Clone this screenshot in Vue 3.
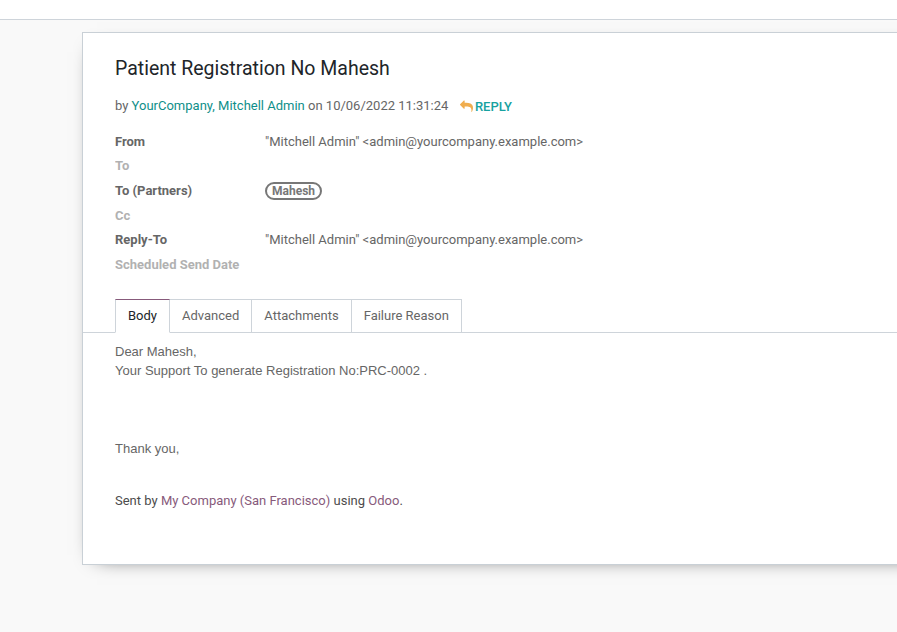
<script setup>
const fields = [
  { label: 'From', value: '"Mitchell Admin" <admin@yourcompany.example.com>' },
  { label: 'To', empty: true },
  { label: 'To (Partners)', tag: 'Mahesh' },
  { label: 'Cc', empty: true },
  { label: 'Reply-To', value: '"Mitchell Admin" <admin@yourcompany.example.com>' },
  { label: 'Scheduled Send Date', empty: true },
]
const tabs = ['Body', 'Advanced', 'Attachments', 'Failure Reason']
</script>

<template>
  <div class="page">
    <header class="topbar"></header>
    <main class="sheet">
      <h1>Patient Registration No Mahesh</h1>
      <div class="byline">
        <span>by <a>YourCompany, Mitchell Admin</a> on 10/06/2022 11:31:24</span>
        <button class="reply">
          <svg viewBox="0 0 1792 1792" width="13" height="13"><path fill="#f0ad4e" d="M1792 1120q0 166-127 451-3 7-10.500 24t-13.500 30-13 22q-12 17-28 17-15 0-23.500-10t-8.500-25q0-9 2.500-26.500t2.500-23.500q5-68 5-123 0-101-17.500-181t-48.500-138.500-80-101-105.500-69.500-133-42.500-154-21.500-175.500-6h-224v256q0 26-19 45t-45 19-45-19l-512-512q-19-19-19-45t19-45l512-512q19-19 45-19t45 19 19 45v256h224q713 0 875 403 53 134 53 333z" /></svg>REPLY
        </button>
      </div>
      <dl class="fields">
        <div v-for="f in fields" :key="f.label" class="field">
          <dt :class="{ empty: f.empty }">{{ f.label }}</dt>
          <dd><span v-if="f.tag" class="tag">{{ f.tag }}</span><template v-else>{{ f.value }}</template></dd>
        </div>
      </dl>
      <nav class="tabs">
        <a v-for="(t, i) in tabs" :key="t" class="tab" :class="{ active: i === 0 }">{{ t }}</a>
      </nav>
      <section class="body">
        <p class="message">Dear Mahesh,<br>Your Support To generate Registration No:PRC-0002 .</p>
        <p class="message thanks">Thank you,</p>
        <p class="sent">Sent by <a>My Company (San Francisco)</a> using <a>Odoo</a>.</p>
      </section>
    </main>
  </div>
</template>

<style>
body { background: #f9f9f9; overflow: hidden; }
</style>
<style scoped>
* { box-sizing: border-box; }
.page { height: 632px; overflow: hidden; background: #f9f9f9; color: #666; font: 13px/19.500px Roboto, sans-serif; }
.topbar { height: 20px; background: #fff; border-bottom: 1px solid #ced4da; }
.sheet { margin: 12px -60px 0 82px; height: 533px; padding-top: 24px; background: #fff; border: 1px solid #c9d0d6; box-shadow: 0 5px 20px -15px #000; }
h1 { margin: 0 32px; font-size: 19.500px; line-height: 24px; font-weight: 400; color: #212529; }
.byline { display: flex; align-items: center; margin: 14px 32px 0; height: 22px; }
.byline a { color: #108f8a; }
.reply { display: flex; align-items: center; margin: 2px 0 0 12px; padding: 0; border: 0; background: none; color: #17a2a0; font: 500 13px/20px Roboto, sans-serif; }
.reply svg { margin: 0 1.500px 2px 0; }
.fields { margin: 14.850px 32px 0; }
.field { display: grid; grid-template-columns: 150px 1fr; height: 24.600px; }
dt { font-weight: 700; }
dt.empty { opacity: .5; }
dd { margin: 0; }
.tag { display: inline-block; height: 18px; padding: 0 5px; border: 2px solid #777; border-radius: 9px; font-size: 12px; line-height: 14px; font-weight: 700; color: #777; }
.tabs { display: flex; margin-top: 19.150px; padding-left: 32px; height: 34px; border-bottom: 1px solid #ced4da; }
.tab { height: 34px; padding: 6px 12px; border: 1px solid #ced4da; border-left: 0; }
.tab.active { border-left: 1px solid #ced4da; border-top-color: #875a7b; border-bottom-color: #fff; background: #fff; color: #212529; }
.body { padding: 9px 32px 0; }
.message { font-family: "Liberation Sans", Arial, sans-serif; }
p { margin: 0; }
.thanks { margin-top: 58px; }
.sent { margin-top: 33px; color: #4c4c4c; }
.sent a { color: #875a7b; }
</style>
